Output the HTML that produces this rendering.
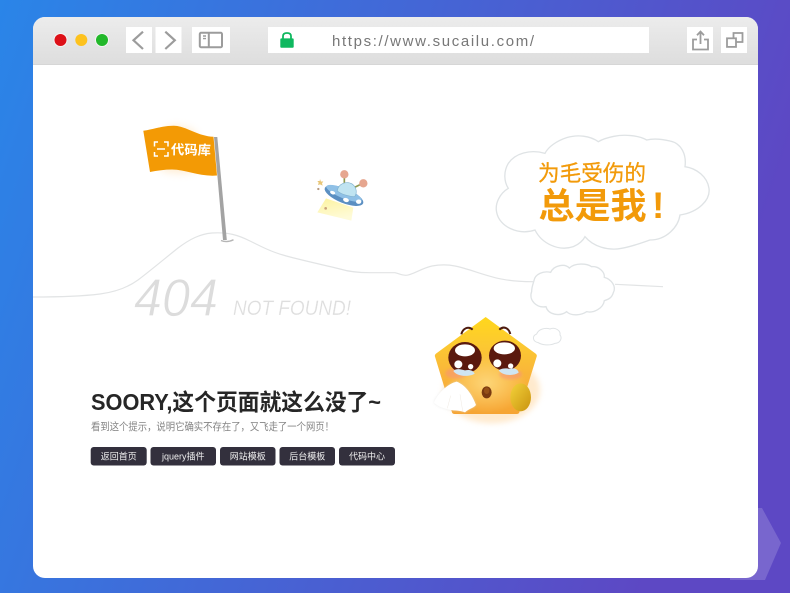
<!DOCTYPE html>
<html><head><meta charset="utf-8"><style>
html,body{margin:0;padding:0;width:790px;height:593px;overflow:hidden;background:#3f6ad8}
svg{display:block;filter:blur(.3px)}
text{font-family:"Liberation Sans","Noto Sans CJK SC",sans-serif}
</style></head><body>
<svg width="790" height="593" viewBox="0 0 790 593" xmlns="http://www.w3.org/2000/svg">
<defs>
<linearGradient id="bg" x1="0" y1="0" x2="1" y2="0.25"><stop offset="0" stop-color="#2a85e8"/><stop offset="1" stop-color="#5d48c4"/></linearGradient>
<linearGradient id="bar" x1="0" y1="0" x2="0" y2="1"><stop offset="0" stop-color="#ececec"/><stop offset="1" stop-color="#dddddd"/></linearGradient>
<linearGradient id="star" x1="0" y1="0" x2="0" y2="1"><stop offset="0" stop-color="#ffd71c"/><stop offset="0.3" stop-color="#fcc832"/><stop offset="0.6" stop-color="#f9b43a"/><stop offset="1" stop-color="#f6a433"/></linearGradient>
<radialGradient id="glowc"><stop offset="0" stop-color="#ffe592" stop-opacity="1"/><stop offset="1" stop-color="#ffe592" stop-opacity="0"/></radialGradient>
<linearGradient id="hand" x1="0" y1="0" x2="1" y2="1"><stop offset="0" stop-color="#f3d23a"/><stop offset="1" stop-color="#c9930f"/></linearGradient>
<linearGradient id="beam" x1="0" y1="0" x2="0.3" y2="1"><stop offset="0" stop-color="#fdf3a0"/><stop offset="1" stop-color="#fefbd8"/></linearGradient>
<filter id="b8" x="-30%" y="-30%" width="160%" height="160%"><feGaussianBlur stdDeviation="9"/></filter>
<filter id="b2" x="-30%" y="-30%" width="160%" height="160%"><feGaussianBlur stdDeviation="4"/></filter>
<clipPath id="win"><rect x="33" y="17" width="725" height="561" rx="12"/></clipPath>
</defs>
<rect width="790" height="593" fill="url(#bg)"/>
<polygon points="762,508 781,543 765,580 730,580 730,508" fill="#fff" fill-opacity=".17"/>
<g clip-path="url(#win)">
<rect x="33" y="17" width="725" height="561" fill="#fff"/>
<rect x="33" y="17" width="725" height="48" fill="url(#bar)"/>
<rect x="33" y="64" width="725" height="1" fill="#d6d6d6"/>
</g>
<!-- traffic lights -->
<circle cx="60.500" cy="40" r="7" fill="#f4f4f4"/><circle cx="60.500" cy="40" r="6" fill="#dd1018"/>
<circle cx="81.300" cy="40" r="6" fill="#fdc21e"/>
<circle cx="102" cy="40" r="7" fill="#f4f4f4"/><circle cx="102" cy="40" r="6" fill="#22b82a"/>
<!-- buttons -->
<g fill="#fff">
<rect x="126" y="27" width="26" height="26"/><rect x="155.500" y="27" width="26" height="26"/>
<rect x="192" y="27" width="38" height="26"/><rect x="268" y="27" width="381" height="26"/>
<rect x="687" y="27" width="26" height="26"/><rect x="721" y="27" width="26" height="26"/>
</g>
<g fill="none" stroke="#9c9c9c">
<path d="M143 31.700L133.500 40.300L143 49" stroke-width="2.200"/>
<path d="M165.300 31.700L174.800 40.300L165.300 49" stroke-width="2.200"/>
<rect x="199.800" y="32.800" width="22.200" height="14.400" rx="1.200" stroke-width="2"/>
<path d="M208.800 32.800V47.200" stroke-width="2"/>
<path d="M203 36H206M203 38.600H206" stroke-width="1.400"/>
<path d="M697 39.500H693V49.500H708V39.500H704" stroke-width="1.800"/>
<path d="M700.500 44V32M697 35.200L700.500 31.600L704 35.200" stroke-width="1.800"/>
<path d="M733.500 38V33H742.500V42H736" stroke-width="1.800"/>
<rect x="727" y="38.300" width="9" height="8.600" stroke-width="1.800"/>
</g>
<!-- lock -->
<rect x="280.300" y="38.400" width="13.400" height="9.400" rx="1" fill="#0fb85f"/>
<path d="M283 39V36.200C283 33.900 284.800 33 287 33C289.200 33 291 33.900 291 36.200V39" fill="none" stroke="#0fb85f" stroke-width="1.800"/>
<text x="332" y="46" font-size="15" fill="#777" textLength="202" lengthAdjust="spacing">https://www.sucailu.com/</text>

<!-- ridge line -->
<path d="M33 297C55 297 80 296.500 100 294C115 292 127 288 138 280C150 271 163 260 178 248C190 239 200 234 212 233C228 232 238 235 250 241C262 247 272 252 283 255C300 260 320 264 340 269C350 272 360 272.700 370 272.700L395 272.700C400 274 402 275.300 406 275.300C412 275.300 422 268 432 266C440 264.500 448 264.500 455 266C470 269 488 277 503 279.300C512 281 522 281.700 533 281.700M615 284.300L663 286.700" fill="none" stroke="#e2e4e5" stroke-width="1.200"/>

<!-- flag -->
<path d="M165 128Q180 122 196 132L203 168Q185 178 160 170Z" fill="#ffcf8a" opacity=".35" filter="url(#b2)"/>
<path d="M143.300 130.800C155 129 163 125.600 174 125.700C186 126 197 136 213.500 136.800L217 175.500C200 177 186 169.500 172 169.500C165 169.500 157 170.500 150 172Z" fill="#f39a05"/>
<path d="M221 240.500Q227 243 233.500 239.800" fill="none" stroke="#b5b5b5" stroke-width="1.400"/>
<polygon points="214,137 217.300,137 226.800,240 223,240" fill="#a3a3a3"/>
<g fill="none" stroke="#fff" stroke-width="1.500">
<path d="M158 142H154.500V146.500M164 142H168V146.500M154.500 152V156H158M168 152V156H164M157 149H165"/>
</g>
<text x="171" y="154.500" font-size="13.300" font-weight="700" fill="#fff" transform="rotate(1 190 150)">代码库</text>

<!-- UFO -->
<g transform="translate(310 165) scale(.3333)">
<polygon points="48,100 22,142 124,167 130,128" fill="url(#beam)"/>
<circle cx="47" cy="130" r="4" fill="#c9a27c"/>
<path d="M30 42l3 8 7-1-4 6 2 7-8-4-6 2 2-7-4-5 7 0z" fill="#e8c678"/>
<circle cx="25" cy="72" r="3.500" fill="#b79a80"/>
<path d="M103 38V56M132 68L152 58" stroke="#8f9a4e" stroke-width="5" fill="none"/>
<circle cx="103" cy="28" r="12.500" fill="#e6a68f"/><circle cx="160" cy="55" r="12.500" fill="#e6a68f"/>
<ellipse cx="102" cy="92" rx="62" ry="22" fill="#5b8fc2" transform="rotate(22 102 92)"/>
<ellipse cx="102" cy="85" rx="57" ry="15" fill="#8fc0e6" transform="rotate(22 102 85)"/>
<path d="M82 78C84 56 110 46 128 58C140 68 142 84 134 95C115 94 94 88 82 78Z" fill="#c0e4f1" stroke="#82b3cf" stroke-width="2"/>
<ellipse cx="68" cy="83" rx="8" ry="5" fill="#fff" transform="rotate(20 68 83)"/><ellipse cx="108" cy="105" rx="9" ry="6" fill="#fff" transform="rotate(20 108 105)"/><ellipse cx="146" cy="110" rx="8" ry="6.500" fill="#fff"/>
</g>

<!-- big cloud -->
<g transform="translate(490 125) scale(.3333)" fill="#fff" stroke="#dfe3e5" stroke-width="4">
<path d="M55 190C30 205 14 235 20 262C28 305 85 332 135 315C155 355 205 380 250 365C268 358 280 345 285 335C310 365 355 378 395 370C425 365 460 352 480 345C530 345 565 305 570 270C625 262 662 225 657 190C652 155 620 130 585 125C590 90 575 55 540 48C515 42 490 40 470 45C445 30 400 28 372 34C352 38 335 44 325 50C300 32 262 28 230 38C200 48 175 65 165 85C120 72 75 85 55 115C40 140 42 170 55 190Z"/>
</g>
<!-- small clouds -->
<g transform="translate(360 260) scale(.3333)" fill="#fff" stroke="#dfe3e5" stroke-width="4">
<path d="M522 62C525 42 550 32 572 37C582 15 615 10 628 24C645 8 680 10 695 20C715 18 735 35 733 52C755 58 770 80 760 98C755 115 745 118 733 122C730 145 700 160 680 155C665 165 635 170 620 155C600 170 565 165 558 140C530 145 505 120 515 95C515 80 520 70 522 62Z"/>
<path d="M530 222C535 208 555 202 570 207C585 200 603 212 600 225C608 235 600 250 585 250C570 258 545 255 535 248C518 245 515 228 530 222Z" stroke-width="3"/>
</g>
<!-- big cloud text -->
<text x="538" y="181" font-size="22" fill="#f29a0a" stroke="#f29a0a" stroke-width=".3" textLength="108" lengthAdjust="spacingAndGlyphs">为毛受伤的</text>
<text x="538.500" y="218" font-size="35.500" font-weight="700" fill="#f29a0a" textLength="108" lengthAdjust="spacingAndGlyphs">总是我</text>
<text x="652" y="218" font-size="37" font-weight="700" fill="#f29a0a" font-family="Liberation Sans">!</text>

<!-- Star character -->
<g transform="translate(420 305) scale(.3333)">
<ellipse cx="215" cy="255" rx="145" ry="100" fill="#ffd9a6" opacity=".55" filter="url(#b8)"/>
<path d="M197 36L347 146Q352 150 350 155L298 322Q296 327 290 327L104 327Q98 327 96 322L45 155Q43 150 48 146Z" fill="url(#star)"/>
<ellipse cx="200" cy="235" rx="120" ry="90" fill="url(#glowc)" opacity=".7"/>
<ellipse cx="108" cy="205" rx="32" ry="16" fill="#f7917a" opacity=".55" filter="url(#b2)"/>
<ellipse cx="272" cy="208" rx="34" ry="16" fill="#f7917a" opacity=".55" filter="url(#b2)"/>
<path d="M124 88C128 70 145 62 158 74M238 74C250 62 266 68 271 87" fill="none" stroke="#4d1b10" stroke-width="6"/>
<ellipse cx="135" cy="158" rx="50" ry="47" fill="#5a190e"/>
<ellipse cx="255" cy="152" rx="48" ry="45" fill="#5a190e"/>
<ellipse cx="135" cy="136" rx="30" ry="18" fill="#fff"/>
<ellipse cx="253" cy="130" rx="32" ry="18" fill="#fff"/>
<circle cx="115" cy="178" r="12" fill="#fff"/><circle cx="152" cy="185" r="8" fill="#fff"/>
<circle cx="232" cy="175" r="12" fill="#fff"/><circle cx="272" cy="183" r="8" fill="#fff"/>
<path d="M100 198C110 188 125 194 135 196C148 193 160 196 164 206C150 216 112 216 100 198Z" fill="#cfe5f2"/>
<path d="M236 196C248 188 262 190 270 192C285 186 295 195 296 203C280 214 248 212 236 196Z" fill="#cfe5f2"/>
<ellipse cx="200" cy="262" rx="15" ry="18" fill="#7a3a10"/>
<ellipse cx="200" cy="257" rx="8" ry="10" fill="#955018"/>
<ellipse cx="302" cy="277" rx="31" ry="42" fill="url(#hand)"/>
<path d="M42 292C55 262 85 236 110 230C135 240 155 265 168 300C160 310 145 312 135 322C120 315 95 318 80 312C65 308 50 302 42 292Z" fill="#ddd" opacity=".6" filter="url(#b2)"/>
<path d="M42 292C55 262 85 236 110 230C135 240 155 265 168 300C160 310 145 312 135 322C120 315 95 318 80 312C65 308 50 302 42 292Z" fill="#fff"/>
<path d="M82 310L92 272M128 318L120 268" stroke="#efe9e2" stroke-width="1.500" fill="none"/>
</g>

<!-- 404 -->
<text x="134" y="316" font-size="53" font-style="italic" fill="#dcdcdc" stroke="#fff" stroke-width=".7" textLength="84" lengthAdjust="spacingAndGlyphs">404</text>
<text x="233" y="315" font-size="21" font-style="italic" fill="#dedede" stroke="#fff" stroke-width=".25" textLength="118" lengthAdjust="spacingAndGlyphs">NOT FOUND!</text>

<!-- Copy -->
<text x="91" y="410" font-size="23" font-weight="700" fill="#262626" textLength="290" lengthAdjust="spacingAndGlyphs">SOORY,这个页面就这么没了~</text>
<text x="91" y="430" font-size="10.500" fill="#858585" textLength="243" lengthAdjust="spacingAndGlyphs">看到这个提示，说明它确实不存在了，又飞走了一个网页！</text>
<g fill="#33303d">
<rect x="90.700" y="447" width="56" height="18.500" rx="3"/>
<rect x="150.500" y="447" width="65.500" height="18.500" rx="3"/>
<rect x="220" y="447" width="55.500" height="18.500" rx="3"/>
<rect x="279.500" y="447" width="55.500" height="18.500" rx="3"/>
<rect x="339" y="447" width="56" height="18.500" rx="3"/>
</g>
<g fill="#f0f0f0" font-size="9" text-anchor="middle">
<text x="118.700" y="459.500">返回首页</text>
<text x="183.300" y="459.500">jquery插件</text>
<text x="247.700" y="459.500">网站模板</text>
<text x="307.200" y="459.500">后台模板</text>
<text x="367" y="459.500">代码中心</text>
</g>
</svg>
</body></html>
